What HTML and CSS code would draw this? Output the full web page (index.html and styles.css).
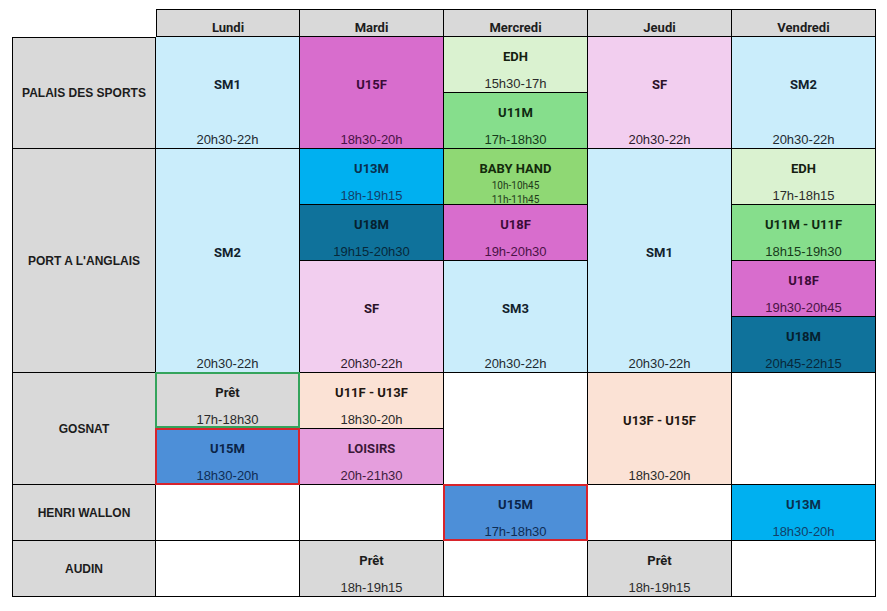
FILE: index.html
```html
<!DOCTYPE html>
<html lang="fr">
<head>
<meta charset="utf-8">
<title>Planning des créneaux</title>
<link rel="stylesheet" href="styles.css">
</head>
<body>
<div class="planning">
  <div class="corner"></div>
  <div class="day first">Lundi</div>
  <div class="day">Mardi</div>
  <div class="day">Mercredi</div>
  <div class="day">Jeudi</div>
  <div class="day">Vendredi</div>

  <!-- PALAIS DES SPORTS -->
  <div class="place first s2">PALAIS DES SPORTS</div>
  <div class="cell s2 r4 sky"><b class="lbl">SM1</b><span class="tm">20h30-22h</span></div>
  <div class="cell s2 r4 mag"><b class="lbl">U15F</b><span class="tm">18h30-20h</span></div>
  <div class="cell r2 mint"><b class="lbl">EDH</b><span class="tm">15h30-17h</span></div>
  <div class="cell s2 r4 pink"><b class="lbl">SF</b><span class="tm">20h30-22h</span></div>
  <div class="cell s2 r4 sky"><b class="lbl">SM2</b><span class="tm">20h30-22h</span></div>
  <div class="cell r2 green"><b class="lbl">U11M</b><span class="tm">17h-18h30</span></div>

  <!-- PORT A L'ANGLAIS -->
  <div class="place s4">PORT A L'ANGLAIS</div>
  <div class="cell s4 r8 sky"><b class="lbl">SM2</b><span class="tm">20h30-22h</span></div>
  <div class="cell r2 cyan"><b class="lbl">U13M</b><span class="tm">18h-19h15</span></div>
  <div class="cell baby lime"><b class="lbl">BABY HAND</b><span class="sm first-line">10h-10h45</span><span class="sm">11h-11h45</span></div>
  <div class="cell s4 r8 sky"><b class="lbl">SM1</b><span class="tm">20h30-22h</span></div>
  <div class="cell r2 mint"><b class="lbl">EDH</b><span class="tm">17h-18h15</span></div>
  <div class="cell r2 teal"><b class="lbl">U18M</b><span class="tm">19h15-20h30</span></div>
  <div class="cell r2 mag"><b class="lbl">U18F</b><span class="tm">19h-20h30</span></div>
  <div class="cell r2 green"><b class="lbl">U11M - U11F</b><span class="tm">18h15-19h30</span></div>
  <div class="cell s2 r4 pink"><b class="lbl">SF</b><span class="tm">20h30-22h</span></div>
  <div class="cell s2 r4 sky"><b class="lbl">SM3</b><span class="tm">20h30-22h</span></div>
  <div class="cell r2 mag"><b class="lbl">U18F</b><span class="tm">19h30-20h45</span></div>
  <div class="cell r2 teal"><b class="lbl">U18M</b><span class="tm">20h45-22h15</span></div>

  <!-- GOSNAT -->
  <div class="place s2">GOSNAT</div>
  <div class="cell r2 grey ring ring-green"><b class="lbl">Prêt</b><span class="tm">17h-18h30</span></div>
  <div class="cell r2 peach"><b class="lbl">U11F - U13F</b><span class="tm">18h30-20h</span></div>
  <div class="cell s2 empty"></div>
  <div class="cell s2 r4 peach"><b class="lbl">U13F - U15F</b><span class="tm">18h30-20h</span></div>
  <div class="cell s2 empty"></div>
  <div class="cell r2 blue ring ring-red"><b class="lbl">U15M</b><span class="tm">18h30-20h</span></div>
  <div class="cell r2 lilac"><b class="lbl">LOISIRS</b><span class="tm">20h-21h30</span></div>

  <!-- HENRI WALLON -->
  <div class="place">HENRI WALLON</div>
  <div class="cell empty"></div>
  <div class="cell empty"></div>
  <div class="cell r2 blue ring ring-red"><b class="lbl">U15M</b><span class="tm">17h-18h30</span></div>
  <div class="cell empty"></div>
  <div class="cell r2 cyan"><b class="lbl">U13M</b><span class="tm">18h30-20h</span></div>

  <!-- AUDIN -->
  <div class="place">AUDIN</div>
  <div class="cell empty"></div>
  <div class="cell r2 grey"><b class="lbl">Prêt</b><span class="tm">18h-19h15</span></div>
  <div class="cell empty"></div>
  <div class="cell r2 grey"><b class="lbl">Prêt</b><span class="tm">18h-19h15</span></div>
  <div class="cell empty"></div>
</div>
</body>
</html>
```

FILE: styles.css
```css
html, body {
  margin: 0;
  padding: 0;
  background: #ffffff;
}

body {
  padding: 9px 0 0 12px;
  font-family: "Liberation Sans", Arial, sans-serif;
  color: #1c1c1c;
}

.planning {
  display: grid;
  grid-template-columns: repeat(6, 144px);
  grid-template-rows: 28px repeat(10, 56px);
  width: 864px;
}

.planning > div {
  box-sizing: border-box;
  border-right: 1px solid #000;
  border-bottom: 1px solid #000;
}

.planning > .corner {
  border: 0;
  background: #fff;
}

.day {
  border-top: 1px solid #000;
  background: #d9d9d9;
  display: flex;
  align-items: flex-end;
  justify-content: center;
  padding-bottom: 0;
  font-family: Roboto, "Liberation Sans", sans-serif;
  font-weight: 700;
  font-size: 13px;
  line-height: 16px;
  color: #1d1d1d;
}

.day.first {
  border-left: 1px solid #000;
}

.place {
  border-left: 1px solid #000;
  background: #d9d9d9;
  display: flex;
  align-items: center;
  justify-content: center;
  font-family: "Liberation Sans", Arial, sans-serif;
  font-weight: 700;
  font-size: 12px;
  color: #1c1c1c;
}

.place.first {
  border-top: 1px solid #000;
}

.s2 { grid-row: span 2; }
.s4 { grid-row: span 4; }

.cell {
  display: grid;
  grid-template-columns: 1fr;
  text-align: center;
  position: relative;
}

.cell.r2 { grid-template-rows: repeat(2, 1fr); }
.cell.r4 { grid-template-rows: repeat(4, 1fr); }
.cell.r8 { grid-template-rows: repeat(8, 1fr); }

.lbl, .tm {
  display: flex;
  align-items: flex-end;
  justify-content: center;
  padding-bottom: 0;
  line-height: 16px;
}

.lbl {
  font-family: Roboto, "Liberation Sans", sans-serif;
  font-weight: 700;
  font-size: 13px;
}

.tm {
  font-family: "Liberation Sans", Arial, sans-serif;
  font-weight: 400;
  font-size: 13px;
  color: #2a2a2a;
}

.r2 .lbl { grid-row: 1; }
.r2 .tm { grid-row: 2; }
.r4 .lbl { grid-row: 2; }
.r4 .tm { grid-row: 4; }
.r8 .lbl { grid-row: 4; }
.r8 .tm { grid-row: 8; }

.cell.baby {
  display: flex;
  flex-direction: column;
  align-items: center;
  overflow: hidden;
}

.baby .lbl {
  height: 28px;
  flex-shrink: 0;
  box-sizing: border-box;
}

.baby .sm {
  flex-shrink: 0;
  font-family: Roboto, "Liberation Sans", sans-serif;
  font-size: 10px;
  line-height: 14px;
  color: #1f3a1a;
}

.baby .first-line {
  margin-top: 2px;
}

/* colours */
.empty { background: #ffffff; }
.grey { background: #d9d9d9; }
.sky { background: #caedfb; }
.sky .lbl { color: #12222c; }
.sky .tm { color: #1e2a30; }
.mag { background: #d86dcd; }
.mag .lbl { color: #3a0b38; }
.mag .tm { color: #4a1346; }
.mint { background: #daf2d0; }
.mint .lbl { color: #142010; }
.green { background: #86de8c; }
.green .lbl { color: #0f2a12; }
.green .tm { color: #173a1b; }
.lime { background: #8fd874; }
.lime .lbl { color: #132a0c; }
.pink { background: #f2ceef; }
.pink .lbl { color: #2a1228; }
.pink .tm { color: #2e1a2c; }
.cyan { background: #00b0f0; }
.cyan .lbl { color: #0a2f4d; }
.cyan .tm { color: #12406a; }
.teal { background: #0f729b; }
.teal .lbl { color: #06202e; }
.teal .tm { color: #07283a; }
.peach { background: #fbe2d5; }
.peach .lbl { color: #221611; }
.blue { background: #4d8fd8; }
.blue .lbl { color: #0b2447; }
.blue .tm { color: #0f2d55; }
.lilac { background: #e59edd; }
.lilac .lbl { color: #3a1838; }
.lilac .tm { color: #3f1c3c; }

/* highlighted frames drawn over the grid lines */
.ring::after {
  content: "";
  position: absolute;
  top: -1px;
  left: -1px;
  right: -1px;
  bottom: -1px;
  pointer-events: none;
  z-index: 2;
}

.ring-red::after { border: 2px solid #d8242c; }
.ring-green::after {
  border: 2px solid #34a45c;
  bottom: 0;
}
```
